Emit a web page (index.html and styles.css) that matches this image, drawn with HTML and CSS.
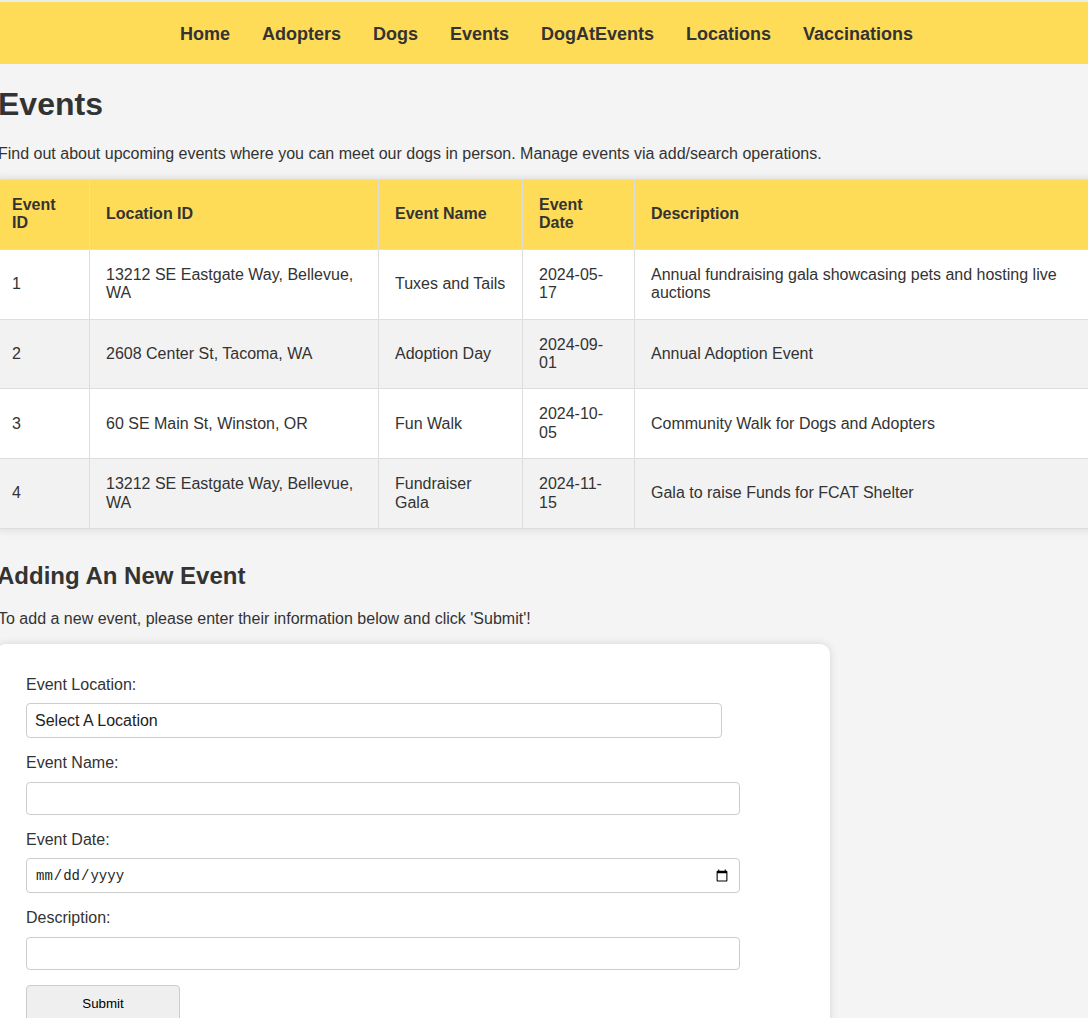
FILE: index.html
```html
<!DOCTYPE html>
<html lang="en">
<head>
<meta charset="utf-8">
<title>Events</title>
<link rel="stylesheet" href="styles.css">
</head>
<body>
<nav class="topnav">
  <a href="#">Home</a>
  <a href="#">Adopters</a>
  <a href="#">Dogs</a>
  <a href="#">Events</a>
  <a href="#">DogAtEvents</a>
  <a href="#">Locations</a>
  <a href="#">Vaccinations</a>
</nav>
<main class="page">
  <h1 class="title">Events</h1>
  <p class="intro">Find out about upcoming events where you can meet our dogs in person. Manage events via add/search operations.</p>
  <table class="events">
    <thead>
      <tr>
        <th class="c-id">Event ID</th>
        <th class="c-loc">Location ID</th>
        <th class="c-name">Event Name</th>
        <th class="c-date">Event Date</th>
        <th class="c-desc">Description</th>
      </tr>
    </thead>
    <tbody>
      <tr>
        <td>1</td>
        <td>13212 SE Eastgate Way, Bellevue, WA</td>
        <td>Tuxes and Tails</td>
        <td>2024-05-17</td>
        <td>Annual fundraising gala showcasing pets and hosting live auctions</td>
      </tr>
      <tr>
        <td>2</td>
        <td>2608 Center St, Tacoma, WA</td>
        <td>Adoption Day</td>
        <td>2024-09-01</td>
        <td>Annual Adoption Event</td>
      </tr>
      <tr>
        <td>3</td>
        <td>60 SE Main St, Winston, OR</td>
        <td>Fun Walk</td>
        <td>2024-10-05</td>
        <td>Community Walk for Dogs and Adopters</td>
      </tr>
      <tr>
        <td>4</td>
        <td>13212 SE Eastgate Way, Bellevue, WA</td>
        <td>Fundraiser Gala</td>
        <td>2024-11-15</td>
        <td>Gala to raise Funds for FCAT Shelter</td>
      </tr>
    </tbody>
  </table>

  <h2 class="subtitle">Adding An New Event</h2>
  <p class="intro">To add a new event, please enter their information below and click 'Submit'!</p>

  <form class="card">
    <label class="lbl" for="loc">Event Location:</label>
    <select id="loc" class="field select">
      <option>Select A Location</option>
    </select>
    <label class="lbl" for="name">Event Name:</label>
    <input id="name" class="field text" type="text">
    <label class="lbl" for="date">Event Date:</label>
    <input id="date" class="field date" type="date">
    <label class="lbl" for="desc">Description:</label>
    <input id="desc" class="field text" type="text">
    <button type="button" class="submit">Submit</button>
  </form>
</main>
</body>
</html>
```

FILE: styles.css
```css
html {
  overflow: hidden;
}

body {
  margin: 0;
  background: #f4f4f4;
  color: #333;
  font-family: "Liberation Sans", Arial, sans-serif;
}

.topnav {
  display: flex;
  justify-content: center;
  align-items: center;
  box-sizing: border-box;
  height: 64px;
  padding: 3px 0 0 5px;
  border-top: 2px solid #ececec;
  background: #ffdc58;
}

.topnav a {
  color: #333;
  text-decoration: none;
  font-weight: bold;
  font-size: 18px;
  padding: 0 16px;
}

.page {
  margin-left: -2px;
}

.title {
  font-size: 32px;
  margin: 22px 0 22px;
}

.intro {
  font-size: 16px;
  margin: 0 0 16px;
}

.events {
  margin: 16px 0 33px -3px;
  border-collapse: collapse;
  table-layout: fixed;
  width: 1099px;
  background: #fff;
  box-shadow: 0 0 9px rgba(0, 0, 0, 0.12);
  font-size: 16px;
}

.events th,
.events td {
  border: 1px solid #ddd;
  padding: 16px;
  text-align: left;
  line-height: 18.4px;
}

.events th {
  background: #ffdc58;
  font-weight: bold;
}

.events tbody tr:nth-child(even) td {
  background: #f2f2f2;
}

.c-id { width: 61px; }
.c-loc { width: 256px; }
.c-name { width: 111px; }
.c-date { width: 79px; }
.c-desc { width: 427px; }

.subtitle {
  font-size: 24px;
  margin: 0 0 20px -1px;
}

.card {
  margin: 15px 0 0 -2px;
  width: 774px;
  padding: 32px 30px 30px;
  background: #fff;
  border-radius: 10px;
  box-shadow: 0 0 8px rgba(0, 0, 0, 0.13);
  display: flex;
  flex-direction: column;
  align-items: flex-start;
}

.lbl {
  display: block;
  font-size: 16px;
  line-height: 18.4px;
  margin-bottom: 9px;
}

.field {
  box-sizing: border-box;
  border: 1px solid #ccc;
  border-radius: 4px;
  background: #fff;
  margin: 0 0 16px;
  color: #222;
}

.select {
  width: 696px;
  height: 35px;
  padding: 0 8px;
  font-family: "Liberation Sans", Arial, sans-serif;
  font-size: 16px;
  appearance: none;
  -webkit-appearance: none;
}

.text {
  width: 714px;
  height: 33px;
  padding: 0 8px;
  font-size: 13.33px;
}

.date {
  width: 714px;
  height: 35px;
  padding: 0 8px;
  font-family: "Liberation Mono", monospace;
  font-size: 14px;
}

.submit {
  width: 154px;
  height: 38px;
  margin-top: -1px;
  background: #efefef;
  border: 1px solid #ccc;
  border-radius: 4px;
  font-family: "Liberation Sans", Arial, sans-serif;
  font-size: 13.33px;
  color: #000;
}
```
